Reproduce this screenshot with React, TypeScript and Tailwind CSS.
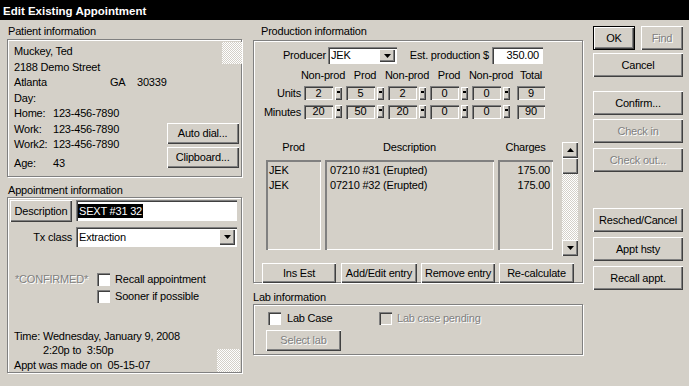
import React from 'react';

// classic win32 bevels
const raised = 'bg-[#d4d0c8] shadow-[inset_1px_1px_0_#fff,inset_-1px_-1px_0_#404040,inset_-2px_-2px_0_#808080]';
const sunken = 'shadow-[inset_1px_1px_0_#808080,inset_2px_2px_0_#404040,inset_-1px_-1px_0_#fff]';
const listBox = 'bg-[#d4d0c8] shadow-[inset_2px_2px_0_#808080,inset_-1px_-1px_0_#fff]';
const etched = 'border border-[#808080] shadow-[inset_1px_1px_0_#fff,1px_1px_0_#fff]';
const grayText = 'text-[#808080] [text-shadow:1px_1px_0_#fff]';
const checker = 'bg-[image:repeating-conic-gradient(#ffffff_0_25%,#d4d0c8_0_50%)] bg-[length:2px_2px]';

type BtnProps = {
  children?: React.ReactNode;
  className?: string;
  disabled?: boolean;
  isDefault?: boolean;
};

const Btn = ({ children, className = '', disabled = false, isDefault = false }: BtnProps) => (
  <div
    className={`flex items-center justify-center whitespace-nowrap ${raised} ${isDefault ? 'border border-black' : ''} ${disabled ? grayText : ''} ${className}`}
  >
    {children}
  </div>
);

const Check = ({ disabled = false }: { disabled?: boolean }) => (
  <div className={`w-[13px] h-[13px] shrink-0 ${disabled ? 'bg-[#d4d0c8]' : 'bg-white'} ${sunken}`} />
);

const DownArrow = () => (
  <svg width="7" height="4" viewBox="0 0 7 4">
    <path d="M0 0h7L3.5 4z" fill="#000" />
  </svg>
);

const Select = ({ value, className = '' }: { value: string; className?: string }) => (
  <div className={`bg-white ${sunken} flex items-stretch p-[2px] ${className}`}>
    <span className="flex-1 pl-[1px] flex items-center">{value}</span>
    <div className={`w-[16px] ${raised} flex items-center justify-center`}>
      <DownArrow />
    </div>
  </div>
);

const Field = ({ v, className = '' }: { v: string; className?: string }) => (
  <div className={`h-[14px] bg-[#d4d0c8] ${sunken} flex items-center justify-center leading-none ${className}`}>
    {v}
  </div>
);

const Spin = () => (
  <div className={`w-[7px] h-[13px] ml-[2px] mr-[4px] flex justify-center pt-[4px] ${raised}`}>
    <div className="w-[3px] h-[2px] bg-black" />
  </div>
);

const ScrollBar = ({ className = '' }: { className?: string }) => (
  <div className={`w-[16px] h-[114px] flex flex-col ${className}`}>
    <div className={`h-[16px] ${raised} flex items-center justify-center`}>
      <svg width="7" height="4" viewBox="0 0 7 4">
        <path d="M3.5 0L7 4H0z" fill="#000" />
      </svg>
    </div>
    <div className={`flex-1 ${checker} flex flex-col`}>
      <div className={`h-[16px] ${raised}`} />
    </div>
    <div className={`h-[16px] ${raised} flex items-center justify-center`}>
      <DownArrow />
    </div>
  </div>
);

const heads = ['Non-prod', 'Prod', 'Non-prod', 'Prod', 'Non-prod'];
const units = ['2', '5', '2', '0', '0'];
const minutes = ['20', '50', '20', '0', '0'];

export default function App() {
  return (
    <div className="w-[689px] h-[386px] overflow-hidden bg-[#d4d0c8] text-black font-['Liberation_Sans',Arial,sans-serif] text-[11px] tracking-[-0.2px]">
      {/* Title bar */}
      <div className="h-[20px] bg-black text-white font-bold text-[11.5px] leading-[22px] pl-[3px] tracking-normal overflow-hidden">
        Edit Existing Appointment
      </div>

      <div className="flex pl-[7px]">
        {/* Left column */}
        <div className="w-[236px] flex flex-col">
          <div className="h-[19px] pt-[4px] leading-[15px] pl-[1px]">Patient information</div>
          <div className={`h-[138px] w-[235px] ${etched} flex`}>
            <div className="flex-1 pl-[6px] pt-[4px] leading-[15.5px] whitespace-nowrap">
              <div>Muckey, Ted</div>
              <div>2188 Demo Street</div>
              <div className="flex">
                <span className="w-[96px]">Atlanta</span>
                <span className="w-[27px]">GA</span>
                <span>30339</span>
              </div>
              <div>Day:</div>
              <div className="flex">
                <span className="w-[39px]">Home:</span>
                <span>123-456-7890</span>
              </div>
              <div className="flex">
                <span className="w-[39px]">Work:</span>
                <span>123-456-7890</span>
              </div>
              <div className="flex">
                <span className="w-[39px]">Work2:</span>
                <span>123-456-7890</span>
              </div>
              <div className="flex mt-[3px]">
                <span className="w-[39px]">Age:</span>
                <span>43</span>
              </div>
            </div>
            <div className="flex flex-col items-end justify-between">
              <div className={`w-[20px] h-[22px] mt-[2px] mr-[3px] ${checker}`} />
              <div className="flex flex-col gap-[3px] mr-[6px] mb-[8px]">
                <Btn className="w-[72px] h-[21px]">Auto dial...</Btn>
                <Btn className="w-[72px] h-[21px]">Clipboard...</Btn>
              </div>
            </div>
          </div>

          <div className="h-[20px] pt-[6px] leading-[15px] pl-[1px]">Appointment information</div>
          <div className={`h-[176px] w-[235px] ${etched} flex flex-col`}>
            <div className="flex mt-[2px] ml-[2px]">
              <Btn className="w-[62px] h-[22px]">Description</Btn>
              <div className={`ml-[4px] w-[161px] h-[21px] bg-white ${sunken} flex items-center pl-[2px]`}>
                <span className="bg-black text-white px-[1px] leading-[14px]">SEXT #31 32</span>
              </div>
            </div>
            <div className="flex items-center mt-[5px]">
              <div className="w-[64px] text-right">Tx class</div>
              <Select className="ml-[4px] w-[161px] h-[20px]" value="Extraction" />
            </div>
            <div className="flex items-center mt-[26px] h-[13px]">
              <div className={`w-[89px] pl-[7px] ${grayText}`}>*CONFIRMED*</div>
              <Check />
              <span className="ml-[5px]">Recall appointment</span>
            </div>
            <div className="flex items-center mt-[4px] h-[13px]">
              <div className="w-[89px]" />
              <Check />
              <span className="ml-[5px]">Sooner if possible</span>
            </div>
            <div className="flex justify-between items-end flex-1">
              <div className="pl-[6px] leading-[14.5px] whitespace-pre">
                <div>Time: Wednesday, January 9, 2008</div>
                <div className="pl-[29px]">2:20p to  3:50p</div>
                <div>Appt was made on  05-15-07</div>
              </div>
              <div className={`w-[23px] h-[23px] mr-[1px] ${checker}`} />
            </div>
          </div>
        </div>

        {/* Middle column */}
        <div className="ml-[10px] w-[331px] flex flex-col">
          <div className="h-[20px] pt-[4px] leading-[15px] pl-[8px]">Production information</div>
          <div className={`h-[243px] w-[330px] ${etched} flex flex-col`}>
            <div className="flex items-center mt-[6px]">
              <div className="w-[72px] text-right">Producer</div>
              <Select className="ml-[2px] w-[69px] h-[17px]" value="JEK" />
              <div className="w-[92px] text-right whitespace-nowrap">Est. production $</div>
              <div className={`ml-[3px] w-[51px] h-[17px] bg-white ${sunken} text-right pr-[4px] leading-[17px]`}>
                350.00
              </div>
            </div>

            <div className="flex mt-[4px] h-[14px] leading-[14px]">
              <div className="w-[50px]" />
              {heads.map((h, i) => (
                <div key={i} className="w-[42px] pr-[4px] flex justify-center whitespace-nowrap">
                  {h}
                </div>
              ))}
              <div className="ml-[3px] w-[28px] flex justify-center">Total</div>
            </div>

            <div className="flex items-center mt-[3px]">
              <div className="w-[48px] text-right pr-[1px]">Units</div>
              <div className="w-[2px]" />
              {units.map((v, i) => (
                <React.Fragment key={i}>
                  <Field v={v} className="w-[29px]" />
                  <Spin />
                </React.Fragment>
              ))}
              <Field v="9" className="ml-[3px] w-[28px]" />
            </div>
            <div className="flex items-center mt-[2px]">
              <div className="w-[48px] text-right pr-[1px]">Minutes</div>
              <div className="w-[2px]" />
              {minutes.map((v, i) => (
                <React.Fragment key={i}>
                  <Field v={v} className="w-[29px]" />
                  <Spin />
                </React.Fragment>
              ))}
              <Field v="90" className="ml-[3px] w-[28px]" />
            </div>

            {/* Procedure list */}
            <div className="flex items-start mt-[20px] pl-[12px]">
              <div className="flex flex-col">
                <div className="flex gap-[4px] h-[14px] leading-[14px]">
                  <div className="w-[55px] text-center">Prod</div>
                  <div className="w-[169px] text-center">Description</div>
                  <div className="w-[55px] text-center">Charges</div>
                </div>
                <div className="flex gap-[4px] mt-[6px] h-[90px] leading-[15px]">
                  <div className={`w-[55px] ${listBox} pl-[3px] pt-[3px]`}>
                    <div>JEK</div>
                    <div>JEK</div>
                  </div>
                  <div className={`w-[169px] ${listBox} pl-[5px] pt-[3px]`}>
                    <div>07210 #31 (Erupted)</div>
                    <div>07210 #32 (Erupted)</div>
                  </div>
                  <div className={`w-[55px] ${listBox} pr-[3px] pt-[3px] text-right`}>
                    <div>175.00</div>
                    <div>175.00</div>
                  </div>
                </div>
              </div>
              <ScrollBar className="ml-[9px] mt-[2px]" />
            </div>

            <div className="flex mt-[7px] pl-[8px]">
              <Btn className="w-[74px] h-[20px]">Ins Est</Btn>
              <Btn className="ml-[5px] w-[76px] h-[20px]">Add/Edit entry</Btn>
              <Btn className="ml-[4px] w-[74px] h-[20px]">Remove entry</Btn>
              <Btn className="ml-[4px] w-[75px] h-[20px]">Re-calculate</Btn>
            </div>
          </div>

          <div className="h-[21px] pt-[7px] leading-[15px]">Lab information</div>
          <div className={`h-[51px] w-[330px] ${etched} flex flex-col`}>
            <div className="flex items-center mt-[7px] pl-[14px] h-[13px]">
              <div className="w-[111px] flex items-center">
                <Check />
                <span className="ml-[6px]">Lab Case</span>
              </div>
              <Check disabled />
              <span className={`ml-[5px] ${grayText}`}>Lab case pending</span>
            </div>
            <Btn disabled className="ml-[12px] mt-[5px] w-[75px] h-[21px]">
              Select lab
            </Btn>
          </div>
        </div>

        {/* Right column */}
        <div className="ml-[9px] w-[90px] flex flex-col pt-[6px]">
          <div className="flex justify-between">
            <Btn isDefault className="w-[42px] h-[24px]">OK</Btn>
            <Btn disabled className="w-[42px] h-[24px]">Find</Btn>
          </div>
          <Btn className="mt-[3px] h-[24px]">Cancel</Btn>
          <Btn className="mt-[14px] h-[24px]">Confirm...</Btn>
          <Btn disabled className="mt-[4px] h-[24px]">Check in</Btn>
          <Btn disabled className="mt-[5px] h-[24px]">Check out...</Btn>
          <Btn className="mt-[36px] h-[24px]">Resched/Cancel</Btn>
          <Btn className="mt-[5px] h-[24px]">Appt hsty</Btn>
          <Btn className="mt-[5px] h-[24px]">Recall appt.</Btn>
        </div>
      </div>
    </div>
  );
}
